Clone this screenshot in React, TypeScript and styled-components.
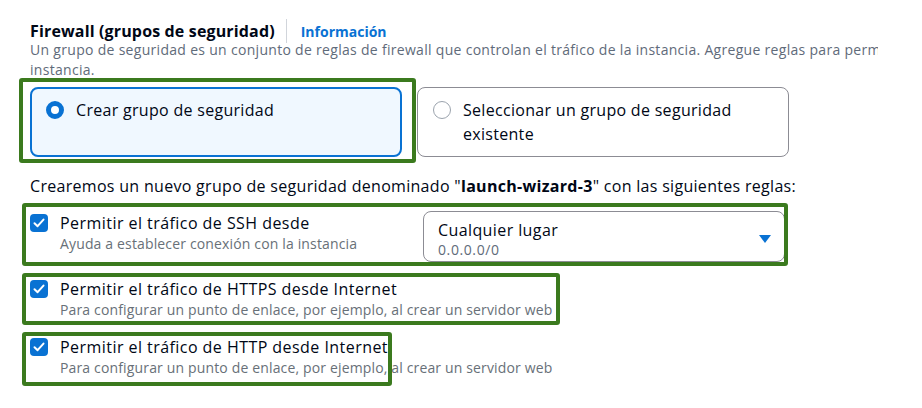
import styled, { createGlobalStyle } from 'styled-components';

const GlobalStyle = createGlobalStyle`
  html, body {
    margin: 0;
    padding: 0;
    background: #ffffff;
    overflow: hidden;
  }

  body {
    font-family: "Open Sans", "Noto Sans", sans-serif;
    color: #000716;
  }
`;

const rules = [
  {
    title: 'Permitir el tráfico de SSH desde',
    hint: 'Ayuda a establecer conexión con la instancia',
    source: { label: 'Cualquier lugar', value: '0.0.0.0/0' },
  },
  {
    title: 'Permitir el tráfico de HTTPS desde Internet',
    hint: 'Para configurar un punto de enlace, por ejemplo, al crear un servidor web',
  },
  {
    title: 'Permitir el tráfico de HTTP desde Internet',
    hint: 'Para configurar un punto de enlace, por ejemplo, al crear un servidor web',
  },
];

// green marks drawn over the screenshot
const marks = [
  { top: 78, left: 19, width: 397, height: 85 },
  { top: 203, left: 22, width: 766, height: 63 },
  { top: 273, left: 22, width: 538, height: 52 },
  { top: 332, left: 22, width: 370, height: 54 },
];

function CheckIcon() {
  return (
    <svg width="12" height="10" viewBox="0 0 12 10" fill="none">
      <path d="M1.5 5.2 L4.6 8.2 L10.5 1.6" stroke="#fff" strokeWidth="2" strokeLinecap="round" strokeLinejoin="round" />
    </svg>
  );
}

function App() {
  return (
    <Page>
      <GlobalStyle />
      <Header>
        <Title>Firewall (grupos de seguridad)</Title>
        <Divider />
        <InfoLink href="#">Información</InfoLink>
      </Header>
      <Description>
        Un grupo de seguridad es un conjunto de reglas de firewall que controlan el tráfico de la instancia. Agregue reglas para permitir que un tráfico específico llegue a la
        <br />
        instancia.
      </Description>

      <Tiles>
        <Tile $selected>
          <Radio $selected />
          <TileLabel>Crear grupo de seguridad</TileLabel>
        </Tile>
        <Tile>
          <Radio />
          <TileLabel>Seleccionar un grupo de seguridad existente</TileLabel>
        </Tile>
      </Tiles>

      <Summary>
        Crearemos un nuevo grupo de seguridad denominado "<strong>launch-wizard-3</strong>" con las siguientes reglas:
      </Summary>

      <RuleList>
        {rules.map((rule) => (
          <RuleRow key={rule.title}>
            <RuleCheck>
              <Checkbox>
                <CheckIcon />
              </Checkbox>
              <RuleText>
                <RuleTitle>{rule.title}</RuleTitle>
                <RuleHint>{rule.hint}</RuleHint>
              </RuleText>
            </RuleCheck>
            {rule.source && (
              <Select>
                <SelectText>
                  <SelectLabel>{rule.source.label}</SelectLabel>
                  <SelectValue>{rule.source.value}</SelectValue>
                </SelectText>
                <Caret />
              </Select>
            )}
          </RuleRow>
        ))}
      </RuleList>

      {marks.map((m, i) => (
        <Mark key={i} style={{ top: m.top, left: m.left, width: m.width, height: m.height }} />
      ))}
    </Page>
  );
}

const Page = styled.div`
  position: relative;
  width: 922px;
  height: 408px;
  padding: 19px 0 0 30px;
  box-sizing: border-box;
`;

const Header = styled.div`
  display: flex;
  align-items: center;
  height: 24px;
`;

const Title = styled.h2`
  margin: 0;
  font-size: 16px;
  font-weight: 700;
  letter-spacing: 0.15px;
  color: #000716;
`;

const Divider = styled.span`
  width: 1px;
  height: 24px;
  background: #d1d5db;
  margin: 0 14px 0 11px;
`;

const InfoLink = styled.a`
  font-size: 14px;
  font-weight: 700;
  color: #0972d3;
  text-decoration: none;
`;

const Description = styled.p`
  margin: -3px 0 0;
  width: 848px;
  overflow: hidden;
  white-space: nowrap;
  font-size: 14px;
  line-height: 20px;
  letter-spacing: 0.3px;
  color: #5f6b7a;
`;

const Tiles = styled.div`
  display: flex;
  gap: 15px;
  margin-top: 7px;
`;

const Tile = styled.div<{ $selected?: boolean }>`
  display: flex;
  align-items: flex-start;
  gap: 12px;
  width: 372px;
  height: 70px;
  box-sizing: border-box;
  border-radius: 8px;
  border: ${(p) => (p.$selected ? '2px solid #0972d3' : '1px solid #8c8c94')};
  background: ${(p) => (p.$selected ? '#f0f8ff' : '#ffffff')};
  padding: ${(p) => (p.$selected ? '9px 14px' : '10px 15px')};
`;

const Radio = styled.span<{ $selected?: boolean }>`
  flex: none;
  width: 18px;
  height: 18px;
  margin-top: 3px;
  box-sizing: border-box;
  border-radius: 50%;
  border: ${(p) => (p.$selected ? '5px solid #0972d3' : '1.5px solid #9ba3ad')};
  background: #ffffff;
`;

const TileLabel = styled.span`
  font-size: 16px;
  line-height: 24px;
  letter-spacing: 0.3px;
  color: #000716;
  width: 300px;
`;

const Summary = styled.p`
  margin: 17px 0 0;
  font-size: 16px;
  line-height: 24px;
  letter-spacing: 0.3px;
  color: #000716;

  strong {
    font-weight: 700;
  }
`;

const RuleList = styled.div`
  display: flex;
  flex-direction: column;
  gap: 15px;
  margin-top: 13px;
`;

const RuleRow = styled.div`
  display: flex;
  align-items: flex-start;
`;

const RuleCheck = styled.label`
  display: flex;
  align-items: flex-start;
  gap: 12px;
  width: 393px;
  padding-top: 1px;
`;

const Checkbox = styled.span`
  flex: none;
  display: flex;
  align-items: center;
  justify-content: center;
  width: 18px;
  height: 18px;
  margin-top: 2px;
  border-radius: 4px;
  background: #0972d3;
`;

const RuleText = styled.div`
  display: flex;
  flex-direction: column;
  white-space: nowrap;
`;

const RuleTitle = styled.span`
  font-size: 16px;
  line-height: 22px;
  letter-spacing: 0.45px;
  color: #000716;
`;

const RuleHint = styled.span`
  font-size: 14px;
  line-height: 20px;
  letter-spacing: 0.15px;
  color: #687078;
`;

const Select = styled.div`
  display: flex;
  align-items: flex-start;
  justify-content: space-between;
  width: 362px;
  height: 51px;
  box-sizing: border-box;
  padding: 7px 13px 0 14px;
  border: 1px solid #8c8c94;
  border-radius: 8px;
  background: #ffffff;
`;

const SelectText = styled.div`
  display: flex;
  flex-direction: column;
`;

const SelectLabel = styled.span`
  font-size: 16px;
  line-height: 22px;
  letter-spacing: 0.4px;
  color: #000716;
`;

const SelectValue = styled.span`
  font-size: 14px;
  line-height: 18px;
  letter-spacing: 0.6px;
  color: #5f6b7a;
`;

const Caret = styled.span`
  width: 0;
  height: 0;
  margin-top: 16px;
  border-left: 6px solid transparent;
  border-right: 6px solid transparent;
  border-top: 8px solid #0972d3;
`;

const Mark = styled.div`
  position: absolute;
  box-sizing: border-box;
  border: 4px solid #3b7a1e;
  border-radius: 3px;
  pointer-events: none;
`;

export default App;
